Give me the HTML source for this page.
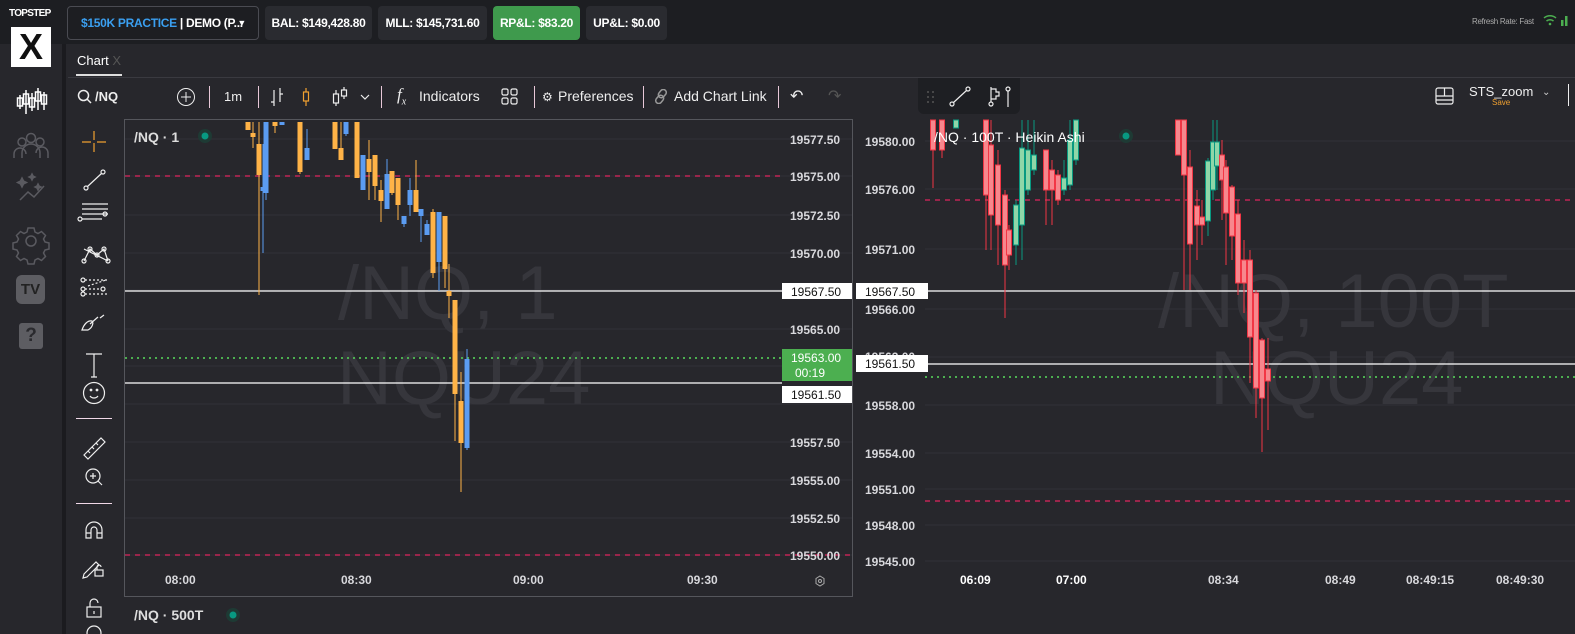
<!DOCTYPE html>
<html><head><meta charset="utf-8"><style>
*{margin:0;padding:0;box-sizing:border-box}
body{width:1575px;height:634px;overflow:hidden;background:#27272c;font-family:"Liberation Sans",sans-serif;color:#e8e8ea;position:relative}
.abs{position:absolute}
.top{left:0;top:0;width:1575px;height:44px;background:#1d1e22}
.btn{position:absolute;top:6px;height:34px;border-radius:4px;background:#2a2b30;font-size:12px;font-weight:bold;line-height:34px;text-align:center;color:#fff;white-space:nowrap;overflow:hidden;letter-spacing:-0.3px}
.side{left:0;top:0;width:62px;height:634px;background:#27272c}
.tb{position:absolute;top:88px;font-size:14px;color:#eee}
.sep{position:absolute;top:86px;width:1px;height:22px;background:#e8c8d8}
</style></head><body>
<div class="abs side"></div>
<div class="abs top"></div>
<div class="abs" style="left:62px;top:44px;width:4px;height:590px;background:#1b1b1f"></div>
<div class="abs" style="left:9px;top:8px;width:44px;font-size:10px;font-weight:bold;color:#fff;letter-spacing:-0.7px">TOPSTEP</div>
<div class="abs" style="left:11px;top:27px;width:40px;height:40px;background:#fff;color:#111;font-weight:bold;font-size:36px;text-align:center;line-height:40px">X</div>
<svg class="abs" style="left:0;top:80px" width="62" height="280" fill="none" stroke="#fff" stroke-width="1.5">
<g><path d="M20 15v14M26 10v24M32 13v18M38 8v22M44 12v18"/><rect x="17.5" y="18" width="5" height="8"/><rect x="23.5" y="14" width="5" height="10"/><rect x="29.5" y="18" width="5" height="9"/><rect x="35.5" y="12" width="5" height="9"/><rect x="41.5" y="15" width="5" height="9"/></g>
<g stroke="#5a5a60"><circle cx="22" cy="62" r="4"/><circle cx="31" cy="58" r="4.5"/><circle cx="40" cy="62" r="4"/><path d="M14 78v-4a6 6 0 0 1 12 0M22 78v-5a9 9 0 0 1 18 0v5M36 73a6 6 0 0 1 12 0v5"/></g>
<g stroke="#5a5a60"><path d="M20 120l8-8 6 5 10-11"/><path d="M22 98l1.5 3 3 1.5-3 1.5-1.5 3-1.5-3-3-1.5 3-1.5z" fill="#5a5a60"/><path d="M32 94l1 2 2 1-2 1-1 2-1-2-2-1 2-1z" fill="#5a5a60"/><path d="M38 104l1 2 2 1-2 1-1 2-1-2-2-1 2-1z" fill="#5a5a60"/></g>
<g stroke="#5a5a60"><circle cx="31" cy="161" r="5"/><path d="M28 148h6l1 4 3 1.5 3.5-2 4 4-2 3.5 1.5 3 4 1v6l-4 1-1.5 3 2 3.5-4 4-3.5-2-3 1.5-1 4h-6l-1-4-3-1.5-3.5 2-4-4 2-3.5-1.5-3-4-1v-6l4-1 1.5-3-2-3.5 4-4 3.5 2 3-1.5z"/></g>
</svg>
<div class="abs" style="left:16px;top:275px;width:29px;height:29px;border-radius:6px;background:#5d5d62;color:#222;font-weight:bold;font-size:15px;text-align:center;line-height:29px">TV</div>
<div class="abs" style="left:19px;top:323px;width:24px;height:26px;border-radius:3px;background:#5d5d62;color:#2a2a2e;font-weight:bold;font-size:19px;text-align:center;line-height:26px">?</div>
<div class="btn" style="left:67px;width:192px;background:#1d1e22;border:1px solid #4a4b52;text-align:left;padding-left:13px;line-height:32px"><span style="color:#3a9ff0">$150K PRACTICE</span> | DEMO (P...<span style="position:absolute;right:12px;top:0;font-size:9px">▼</span></div>
<div class="btn" style="left:265px;width:107px">BAL: $149,428.80</div>
<div class="btn" style="left:378px;width:109px">MLL: $145,731.60</div>
<div class="btn" style="left:493px;width:87px;background:#3f9a4d">RP&amp;L: $83.20</div>
<div class="btn" style="left:586px;width:81px">UP&amp;L: $0.00</div>
<div class="abs" style="left:1472px;top:17px;font-size:8px;color:#aaa;letter-spacing:-0.3px">Refresh Rate: Fast</div>
<svg class="abs" style="left:1543px;top:13px" width="32" height="14"><path d="M1 5a9 9 0 0 1 12 0M3.5 8a5.5 5.5 0 0 1 7 0" stroke="#4caf50" stroke-width="1.5" fill="none"/><circle cx="7" cy="11" r="1.3" fill="#4caf50"/><rect x="18" y="7" width="2.5" height="6" fill="#4caf50"/><rect x="22" y="3" width="2.5" height="10" fill="#4caf50"/></svg>
<div class="abs" style="left:77px;top:53px;font-size:13px;color:#fff">Chart <span style="color:#555">X</span></div>
<div class="abs" style="left:76px;top:74px;width:46px;height:2px;background:#ddd"></div>
<div class="abs" style="left:68px;top:77px;width:1507px;height:1px;background:#3a3a40"></div>
<svg class="abs" style="left:77px;top:89px" width="16" height="16" fill="none" stroke="#eee" stroke-width="1.5"><circle cx="6.5" cy="6.5" r="5"/><path d="M10 10l4 4"/></svg>
<div class="tb" style="left:95px;font-weight:bold;font-size:13px;top:89px">/NQ</div>
<svg class="abs" style="left:176px;top:87px" width="20" height="20" fill="none" stroke="#eee"><circle cx="10" cy="10" r="8.5"/><path d="M10 5v10M5 10h10"/></svg>
<div class="sep" style="left:209px"></div>
<div class="tb" style="left:224px;font-size:13px;top:89px">1m</div>
<div class="sep" style="left:258px"></div>
<svg class="abs" style="left:270px;top:86px" width="110" height="22" fill="none" stroke="#eee" stroke-width="1.2"><path d="M4 4v16M1 16h3M10 2v14M10 8h3"/><g stroke="#f0a030"><path d="M36 2v18"/><rect x="33.5" y="6" width="5" height="9" fill="#27272c"/></g><path d="M66 4v16M74 1v12"/><rect x="63.5" y="8" width="5" height="9" fill="#27272c"/><rect x="71.5" y="4" width="5" height="6" fill="#27272c"/><path d="M91 9l4 4 4-4"/></svg>
<div class="sep" style="left:381px"></div>
<div class="tb" style="left:397px;font-style:italic;font-family:'Liberation Serif',serif;font-size:17px;top:85px">f<sub style="font-size:10px">x</sub></div>
<div class="tb" style="left:419px">Indicators</div>
<svg class="abs" style="left:501px;top:88px" width="18" height="18" fill="none" stroke="#eee" stroke-width="1.2"><rect x="1" y="1" width="6" height="6" rx="1.5"/><rect x="10" y="1" width="6" height="6" rx="1.5"/><rect x="1" y="10" width="6" height="6" rx="1.5"/><rect x="10" y="10" width="6" height="6" rx="1.5"/></svg>
<div class="sep" style="left:534px"></div>
<div class="tb" style="left:542px;font-size:12px;top:90px">⚙</div>
<div class="tb" style="left:558px;font-size:14px">Preferences</div>
<div class="sep" style="left:643px"></div>
<svg class="abs" style="left:654px;top:89px" width="14" height="15" fill="none" stroke="#999" stroke-width="1.5"><rect x="5" y="0" width="6" height="9" rx="3" transform="rotate(40 8 5)"/><rect x="3" y="6" width="6" height="9" rx="3" transform="rotate(40 6 10)"/></svg>
<div class="tb" style="left:674px">Add Chart Link</div>
<div class="sep" style="left:778px"></div>
<div class="tb" style="left:790px;font-size:16px;top:86px">↶</div>
<div class="tb" style="left:828px;font-size:16px;top:86px;color:#555">↷</div>
<div class="abs" style="left:918px;top:78px;width:102px;height:36px;background:#1e1f23;border-radius:0 0 6px 6px"></div>
<svg class="abs" style="left:924px;top:84px" width="95" height="28" fill="none" stroke="#eee" stroke-width="1.2"><g fill="#555" stroke="none"><circle cx="4" cy="8" r="1"/><circle cx="9" cy="8" r="1"/><circle cx="4" cy="13" r="1"/><circle cx="9" cy="13" r="1"/><circle cx="4" cy="18" r="1"/><circle cx="9" cy="18" r="1"/></g><circle cx="28" cy="20" r="2"/><circle cx="44" cy="5" r="2"/><path d="M29.5 18.5l13-12"/><circle cx="67" cy="20" r="2"/><path d="M67 18V3M67 5h5v3h3v4h-3v3h-5"/><circle cx="84" cy="5" r="2"/><path d="M84 7v16"/></svg>
<svg class="abs" style="left:1435px;top:87px" width="20" height="18" fill="none" stroke="#eee" stroke-width="1.2"><rect x="1" y="1" width="17" height="16" rx="2"/><path d="M1 9h17M1 13h17M9.5 1v8"/></svg>
<div class="abs" style="left:1469px;top:84px;font-size:13px;color:#eee">STS_zoom</div>
<div class="abs" style="left:1492px;top:98px;font-size:8px;color:#f0a030">Save</div>
<div class="abs" style="left:1542px;top:87px;font-size:10px;color:#ccc">⌄</div>
<div class="abs" style="left:1568px;top:84px;width:1px;height:22px;background:#eee"></div>
<svg class="abs" style="left:76px;top:128px" width="40" height="506" fill="none" stroke="#eee" stroke-width="1.2">
<g stroke="#f0a030"><path d="M18 3v9M18 15v9M6 14h9M21 14h9"/></g>
<circle cx="10" cy="60" r="2"/><circle cx="27" cy="44" r="2"/><path d="M11.5 58.5l14-13"/>
<path d="M6 76h26M6 81h26M6 86h26M6 91h20"/><circle cx="29" cy="86" r="2"/><circle cx="4" cy="91" r="2"/>
<path d="M8 133l6-12 7 6 7-6 4 12M8 121l24 12"/><circle cx="8" cy="133" r="2"/><circle cx="14" cy="121" r="2"/><circle cx="21" cy="127" r="2"/><circle cx="28" cy="121" r="2"/><circle cx="32" cy="133" r="2"/>
<circle cx="7" cy="152" r="2"/><circle cx="7" cy="161" r="2"/><circle cx="7" cy="166" r="2"/><circle cx="27" cy="161" r="2"/><path d="M9 152h22M9 161h16M9 166h22M12 158l18-6" stroke-dasharray="2 2"/>
<path d="M6 202c2-6 6-10 10-9 2 2 0 7-4 9zM14 196l8-7M24 190l4-3"/>
<path d="M10 226h16M18 226v23M15 249h6"/>
<circle cx="18" cy="265" r="10.5"/><circle cx="15" cy="262" r="0.8" fill="#eee"/><circle cx="21" cy="262" r="0.8" fill="#eee"/><path d="M14 268a5 5 0 0 0 8 0"/>
<path d="M8 327l17-17 4 4-17 17zM12 323l2 2M16 319l2 2M20 315l2 2"/>
<circle cx="17" cy="348" r="7"/><path d="M14 348h6M17 345v6M22 353l4 4"/>
<path d="M10 410v-8a8 8 0 0 1 16 0v8h-5v-8a3 3 0 0 0-6 0v8zM10 405h5M21 405h5"/>
<path d="M8 446l12-12 3 3-12 12-4 1z"/><rect x="19" y="442" width="8" height="6"/><path d="M21 442v-3a2 2 0 0 1 4 0"/>
<rect x="11" y="479" width="14" height="10"/><path d="M14 479v-4a4 4 0 0 1 8 0"/><path d="M18 483v3"/>
<circle cx="18" cy="505" r="7"/>
</svg>
<div class="abs" style="left:76px;top:418px;width:36px;height:1px;background:#f0d8e8"></div>
<div class="abs" style="left:76px;top:503px;width:36px;height:1px;background:#f0d8e8"></div>
<svg class="abs" style="left:0;top:0" width="1575" height="634" font-family="Liberation Sans">
<rect x="124.5" y="119.5" width="728" height="477" fill="#27272c" stroke="#55565c"/>
<g stroke="#323238"><path d="M125 139H852M125 176H852M125 215H852M125 253H852M125 290H852M125 329H852M125 366H852M125 404H852M125 442H852M125 480H852M125 518H852M125 555H852"/>
<path d="M925 141H1575M925 189H1575M925 249H1575M925 309H1575M925 357H1575M925 405H1575M925 453H1575M925 489H1575M925 525H1575M925 561H1575"/></g>
<g fill="#36363c" font-size="76"><text x="338" y="319">/NQ, 1</text><text x="337" y="404">NQU24</text><text x="1158" y="327">/NQ, 100T</text><text x="1210" y="404">NQU24</text></g>
<g stroke-width="1.2"><path d="M125 176H782" stroke="#e0245e" stroke-dasharray="5 5"/><path d="M125 555H852" stroke="#e0245e" stroke-dasharray="5 5"/><path d="M925 200H1575" stroke="#e0245e" stroke-dasharray="5 5"/><path d="M925 501H1575" stroke="#e0245e" stroke-dasharray="5 5"/>
<path d="M125 358H782" stroke="#4caf50" stroke-width="2" stroke-dasharray="2 4"/><path d="M925 377H1575" stroke="#4caf50" stroke-width="2" stroke-dasharray="2 4"/>
<path d="M125 291H782M125 383H782M856 291H1575M856 364H1575" stroke="#fff"/></g>
<g id="lc"></g><g id="rc"></g>
<g fill="#d8d8dc" font-size="12" font-weight="bold"><text x="790" y="144">19577.50</text><text x="790" y="181">19575.00</text><text x="790" y="220">19572.50</text><text x="790" y="258">19570.00</text><text x="790" y="334">19565.00</text><text x="790" y="447">19557.50</text><text x="790" y="485">19555.00</text><text x="790" y="523">19552.50</text><text x="790" y="560">19550.00</text>
<text x="865" y="146">19580.00</text><text x="865" y="194">19576.00</text><text x="865" y="254">19571.00</text><text x="865" y="314">19566.00</text><text x="865" y="410">19558.00</text><text x="865" y="458">19554.00</text><text x="865" y="494">19551.00</text><text x="865" y="530">19548.00</text><text x="865" y="566">19545.00</text>
<text x="165" y="584">08:00</text><text x="341" y="584">08:30</text><text x="513" y="584">09:00</text><text x="687" y="584">09:30</text>
<text x="960" y="584" fill="#fff">06:09</text><text x="1056" y="584" fill="#fff">07:00</text><text x="1208" y="584">08:34</text><text x="1325" y="584">08:49</text><text x="1406" y="584">08:49:15</text><text x="1496" y="584">08:49:30</text></g>
<rect x="782" y="283" width="70" height="16" fill="#fff"/><text x="791" y="296" font-size="12" fill="#111">19567.50</text>
<rect x="782" y="349" width="70" height="32" fill="#4caf50"/><text x="791" y="362" font-size="12" fill="#fff">19563.00</text><text x="795" y="377" font-size="12" fill="#fff">00:19</text>
<rect x="782" y="386" width="70" height="17" fill="#fff"/><text x="791" y="399" font-size="12" fill="#111">19561.50</text>
<rect x="856" y="283" width="72" height="16" fill="#fff"/><text x="865" y="296" font-size="12" fill="#111">19567.50</text>
<text x="865" y="361" font-size="12" fill="#d8d8dc" font-weight="bold">19563.00</text>
<rect x="856" y="355" width="72" height="17" fill="#fff"/><text x="865" y="368" font-size="12" fill="#111">19561.50</text>
<g fill="none" stroke="#aaa"><path d="M820 576l4 2.5v5l-4 2.5-4-2.5v-5z"/><circle cx="820" cy="581" r="1.5"/></g>
<text x="134" y="142" font-size="14" font-weight="bold" fill="#ddd">/NQ · 1</text><circle cx="205" cy="136" r="7" fill="#1e3a34"/><circle cx="205" cy="136" r="3.5" fill="#089981"/>
<text x="934" y="142" font-size="14" fill="#fff">/NQ · 100T · Heikin Ashi</text><circle cx="1126" cy="136" r="7" fill="#1e3a34"/><circle cx="1126" cy="136" r="3.5" fill="#089981"/>
<text x="134" y="620" font-size="14" font-weight="bold" fill="#ddd">/NQ · 500T</text><circle cx="233" cy="615" r="7" fill="#1e3a34"/><circle cx="233" cy="615" r="3.5" fill="#089981"/>
</svg>
<script>
var O='#ffb347',B='#5b9cf2',ns='http://www.w3.org/2000/svg';
function add(g,el,a){var e=document.createElementNS(ns,el);for(var k in a)e.setAttribute(k,a[k]);g.appendChild(e);}
var L=[[248,122,130,122,130,O],[253,133,137,122,148,O],[259,144,175,122,295,O],[263,187,191,144,253,B],[266,122,193,122,200,B],[275,122,126,122,133,O],[282,122,125,122,125,B],[300,122,172,122,174,O],[307,148,160,129,160,B],[335,122,149,122,149,O],[341,148,160,122,160,O],[346,122,134,122,136,B],[357,122,178,122,178,O],[363,155,190,155,190,B],[369,159,172,140,200,O],[375,155,186,155,200,O],[381,190,201,180,222,O],[387,174,209,159,209,B],[392,171,193,171,195,O],[398,178,205,178,220,O],[404,216,224,216,227,B],[410,190,205,178,216,B],[416,190,212,160,212,O],[421,209,216,209,242,B],[427,224,235,220,235,B],[433,212,273,209,278,O],[439,212,262,212,291,B],[445,216,269,216,288,O],[449,291,296,264,318,O],[455,300,394,300,441,O],[461,401,443,372,492,O],[467,359,448,349,450,B]];
var g=document.getElementById('lc');
L.forEach(function(c){add(g,'line',{x1:c[0],x2:c[0],y1:Math.max(c[3],121),y2:c[4],stroke:c[5]});add(g,'rect',{x:c[0]-2.5,y:c[1],width:5,height:c[2]-c[1],fill:c[5]});});
var R='r',G='g';
var Rc=[[933,120,150,120,188,R],[942,120,150,120,158,R],[956,120,128,120,128,G],[986,120,195,120,250,R],[991,145,215,120,250,R],[998,165,225,150,265,R],[1005,195,265,190,318,R],[1009,230,255,225,270,R],[1016,205,245,200,265,G],[1022,148,225,120,260,G],[1028,150,190,120,195,G],[1034,155,170,120,175,G],[1046,150,190,150,225,R],[1052,170,190,160,225,R],[1058,175,200,170,205,R],[1064,178,190,160,195,G],[1070,140,185,120,190,G],[1076,120,160,120,165,G],
[1178,120,155,120,155,R],[1184,120,175,120,290,R],[1190,167,244,150,290,R],[1197,206,225,190,260,R],[1202,217,225,200,245,R],[1208,161,221,158,236,G],[1213,142,190,120,200,G],[1217,142,166,120,190,G],[1222,155,180,140,220,R],[1226,167,213,160,265,R],[1232,187,236,185,260,R],[1238,214,283,200,295,R],[1244,260,283,240,313,R],[1250,260,337,250,383,R],[1256,293,388,290,418,R],[1262,340,398,338,452,R],[1268,369,381,338,430,R]];
var h=document.getElementById('rc');
Rc.forEach(function(c){var st=c[5]==R?'#f23645':'#089981',fl=c[5]==R?'#f7878d':'#8fd6a8';add(h,'line',{x1:c[0],x2:c[0],y1:Math.max(c[3],119),y2:c[4],stroke:st});add(h,'rect',{x:c[0]-2.5,y:c[1],width:5,height:c[2]-c[1],fill:fl,stroke:st});});
</script>
</body></html>
